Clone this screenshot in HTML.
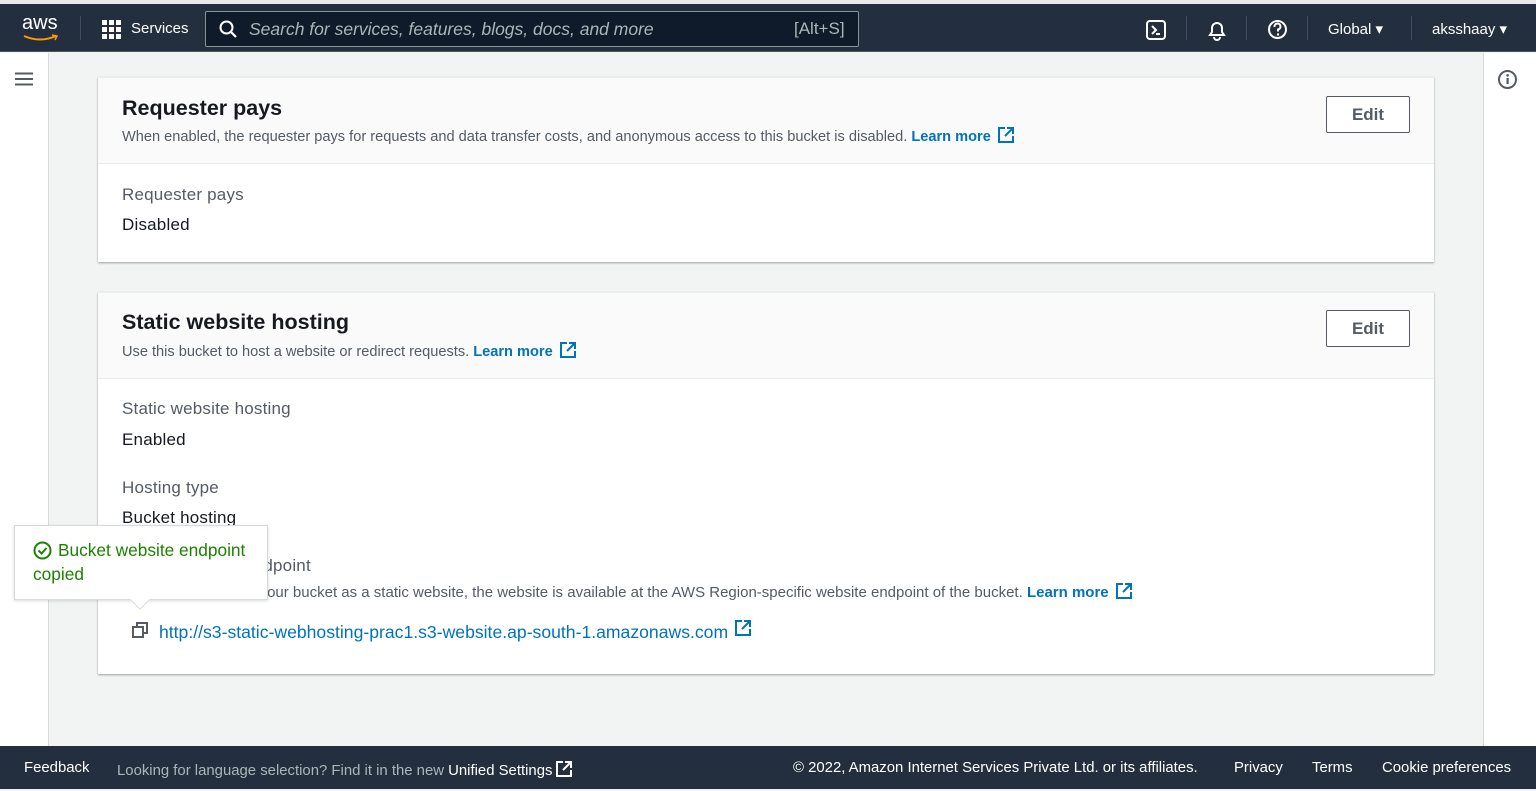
<!DOCTYPE html>
<html><head><meta charset="utf-8"><style>
*{box-sizing:border-box;margin:0;padding:0}
body{width:1536px;height:791px;overflow:hidden;background:#f2f3f3;font-family:"Liberation Sans",sans-serif;position:relative;color:#16191f}
.a{position:absolute;white-space:nowrap}
.nav{position:absolute;left:0;top:4px;width:1536px;height:48px;background:#232f3e;border-bottom:1px solid #4a5566}
.top{position:absolute;left:0;top:0;width:1536px;height:4px;background:#e8eaea}
.w{color:#fff;font-size:15px}
.card{position:absolute;left:98px;width:1336px;background:#fff;box-shadow:0 1px 2px rgba(0,0,0,.35);border-top:1px solid #eaeded}
.hd{background:#fafafa;border-bottom:1px solid #eaeded;position:relative}
h2{font-size:21.5px;font-weight:bold;position:absolute;left:24px}
.desc{font-size:14.6px;color:#545b64;position:absolute;left:24px}
.lm{color:#0073bb;font-weight:bold}
.btn{position:absolute;right:24px;width:84px;height:37px;border:1px solid #545b64;border-radius:2px;background:#fff;font-weight:bold;font-size:17px;color:#545b64;text-align:center;line-height:35px}
.lab{font-size:17px;letter-spacing:.2px;color:#545b64}
.val{font-size:17px;letter-spacing:.2px;color:#16191f}
.ext{display:inline-block;vertical-align:-3px;margin-left:6px}
.foot{position:absolute;left:0;top:746px;width:1536px;height:43px;background:#232f3e;color:#d5dbdb;font-size:14.9px}
</style></head><body>
<div class="top"></div>
<div class="nav">
 <div class="a w" style="left:22px;top:8px;font-size:20px">aws</div>
 <svg class="a" style="left:22px;top:30px" width="38" height="8"><path d="M2 2 Q18 9 34 2" stroke="#f90" stroke-width="2" fill="none"/><path d="M30 1 L35 2 L33 6" stroke="#f90" stroke-width="1.5" fill="none"/></svg>
 <div class="a" style="left:80px;top:12px;width:1px;height:24px;background:#414d5c"></div>
 <svg class="a" style="left:102px;top:16px" width="20" height="20" fill="#fff"><rect x="0" y="0" width="5" height="5"/><rect x="7" y="0" width="5" height="5"/><rect x="14" y="0" width="5" height="5"/><rect x="0" y="7" width="5" height="5"/><rect x="7" y="7" width="5" height="5"/><rect x="14" y="7" width="5" height="5"/><rect x="0" y="14" width="5" height="5"/><rect x="7" y="14" width="5" height="5"/><rect x="14" y="14" width="5" height="5"/></svg>
 <div class="a w" style="left:131px;top:16px">Services</div>
 <div class="a" style="left:205px;top:7px;width:654px;height:36px;background:#0f1b2a;border:1px solid #879596;border-radius:2px"></div>
 <svg class="a" style="left:219px;top:16px" width="18" height="18"><circle cx="7.5" cy="7.5" r="6" stroke="#fff" stroke-width="2" fill="none"/><path d="M12 12 L17 17" stroke="#fff" stroke-width="2.2"/></svg>
 <div class="a" style="left:249px;top:15px;font-size:17.5px;font-style:italic;color:#aab7b8">Search for services, features, blogs, docs, and more</div>
 <div class="a" style="left:794px;top:15px;font-size:17px;color:#aab7b8">[Alt+S]</div>
 <svg class="a" style="left:1146px;top:16px" width="20" height="20"><rect x="1" y="1" width="18" height="18" rx="3" stroke="#fff" stroke-width="2" fill="none"/><path d="M6 6 L10 10 L6 14 M10 14 H14" stroke="#fff" stroke-width="2" fill="none"/></svg>
 <div class="a" style="left:1186px;top:12px;width:1px;height:24px;background:#414d5c"></div>
 <svg class="a" style="left:1206px;top:15px" width="22" height="22"><path d="M4 16 H18 L16 13 V9 A5 5 0 0 0 6 9 V13 Z" stroke="#fff" stroke-width="2" fill="none"/><path d="M8 18 A3 3 0 0 0 14 18" stroke="#fff" stroke-width="2" fill="none"/></svg>
 <div class="a" style="left:1246px;top:12px;width:1px;height:24px;background:#414d5c"></div>
 <svg class="a" style="left:1267px;top:15px" width="21" height="21"><circle cx="10.5" cy="10.5" r="8.5" stroke="#fff" stroke-width="2" fill="none"/><path d="M7.5 8 A3 3 0 1 1 11 10.5 V12.5" stroke="#fff" stroke-width="2" fill="none"/><circle cx="11" cy="15.5" r="1.2" fill="#fff"/></svg>
 <div class="a" style="left:1307px;top:12px;width:1px;height:24px;background:#414d5c"></div>
 <div class="a w" style="left:1328px;top:16px">Global ▾</div>
 <div class="a" style="left:1411px;top:12px;width:1px;height:24px;background:#414d5c"></div>
 <div class="a w" style="left:1432px;top:16px">aksshaay ▾</div>
</div>
<div class="a" style="left:0;top:53px;width:49px;height:693px;background:#fff;border-right:1px solid #d5dbdb"></div>
<svg class="a" style="left:15px;top:72px" width="18" height="14"><path d="M0 1.5 H18 M0 7 H18 M0 12.5 H18" stroke="#545b64" stroke-width="2"/></svg>
<div class="a" style="left:1483px;top:53px;width:53px;height:693px;background:#fff;border-left:1px solid #d5dbdb"></div>
<svg class="a" style="left:1497px;top:69px" width="21" height="21"><circle cx="10.5" cy="10.5" r="8.5" stroke="#545b64" stroke-width="2" fill="none"/><rect x="9.5" y="9" width="2.2" height="6" fill="#545b64"/><circle cx="10.6" cy="6.3" r="1.3" fill="#545b64"/></svg>

<div class="card" style="top:77px;height:185px">
 <div class="hd" style="height:86px">
  <h2 style="top:18px">Requester pays</h2>
  <div class="desc" style="top:48px">When enabled, the requester pays for requests and data transfer costs, and anonymous access to this bucket is disabled. <span class="lm">Learn more</span><svg class="ext" width="18" height="18"><path d="M8 2 H2 V16 H16 V10 M10 2 H16 V8 M16 2 L8 10" stroke="#0073bb" stroke-width="2" fill="none"/></svg></div>
  <div class="btn" style="top:18px">Edit</div>
 </div>
 <div class="a lab" style="left:24px;top:107px">Requester pays</div>
 <div class="a val" style="left:24px;top:137px">Disabled</div>
</div>

<div class="card" style="top:292px;height:382px">
 <div class="hd" style="height:86px">
  <h2 style="top:17px">Static website hosting</h2>
  <div class="desc" style="top:48px">Use this bucket to host a website or redirect requests. <span class="lm">Learn more</span><svg class="ext" width="18" height="18"><path d="M8 2 H2 V16 H16 V10 M10 2 H16 V8 M16 2 L8 10" stroke="#0073bb" stroke-width="2" fill="none"/></svg></div>
  <div class="btn" style="top:17px">Edit</div>
 </div>
 <div class="a lab" style="left:24px;top:106px">Static website hosting</div>
 <div class="a val" style="left:24px;top:137px">Enabled</div>
 <div class="a lab" style="left:24px;top:185px">Hosting type</div>
 <div class="a val" style="left:24px;top:215px">Bucket hosting</div>
 <div class="a lab" style="left:24px;top:263px">Bucket website endpoint</div>
 <div class="a desc" style="left:24px;top:289px;font-size:15px">When you configure your bucket as a static website, the website is available at the AWS Region-specific website endpoint of the bucket. <span class="lm">Learn more</span><svg class="ext" width="18" height="18"><path d="M8 2 H2 V16 H16 V10 M10 2 H16 V8 M16 2 L8 10" stroke="#0073bb" stroke-width="2" fill="none"/></svg></div>
 <svg class="a" style="left:34px;top:329px" width="17" height="17"><rect x="1" y="5" width="10" height="10" stroke="#545b64" stroke-width="2" fill="none"/><path d="M5 5 V1 H15 V11 H11" stroke="#545b64" stroke-width="2" fill="none"/></svg>
 <div class="a" style="left:61px;top:326px;font-size:17.6px;color:#0073bb">http://s3-static-webhosting-prac1.s3-website.ap-south-1.amazonaws.com<svg class="ext" width="18" height="18" style="vertical-align:1px"><path d="M8 2 H2 V16 H16 V10 M10 2 H16 V8 M16 2 L8 10" stroke="#0073bb" stroke-width="2" fill="none"/></svg></div>
</div>

<div class="a" style="left:14px;top:525px;width:254px;height:75px;background:#fff;border:1px solid #d5dbdb;box-shadow:0 1px 3px rgba(0,0,0,.15)"></div>
<div class="a" style="left:133px;top:593px;width:14px;height:14px;background:#fff;transform:rotate(45deg);border-right:1px solid #d5dbdb;border-bottom:1px solid #d5dbdb"></div>
<svg class="a" style="left:33px;top:541px" width="19" height="19"><circle cx="9.5" cy="9.5" r="8" stroke="#1d8102" stroke-width="2" fill="none"/><path d="M5.5 9.5 L8.5 12.5 L13.5 7" stroke="#1d8102" stroke-width="2" fill="none"/></svg>
<div class="a" style="left:58px;top:540px;font-size:17.3px;color:#1d8102">Bucket website endpoint</div>
<div class="a" style="left:33px;top:564px;font-size:17.3px;color:#1d8102">copied</div>

<div class="foot">
 <div class="a" style="left:24px;top:14px;color:#fff">Feedback</div>
 <div class="a" style="left:117px;top:14px;color:#aab7b8">Looking for language selection? Find it in the new <span style="color:#fff">Unified Settings</span><svg class="ext" width="18" height="18" style="margin-left:3px"><path d="M8 2 H2 V16 H16 V10 M10 2 H16 V8 M16 2 L8 10" stroke="#fff" stroke-width="2" fill="none"/></svg></div>
 <div class="a" style="left:793px;top:14px;color:#fff">© 2022, Amazon Internet Services Private Ltd. or its affiliates.</div>
 <div class="a" style="left:1234px;top:14px;color:#fff">Privacy</div>
 <div class="a" style="left:1312px;top:14px;color:#fff">Terms</div>
 <div class="a" style="left:1382px;top:14px;color:#fff">Cookie preferences</div>
</div>
</body></html>
